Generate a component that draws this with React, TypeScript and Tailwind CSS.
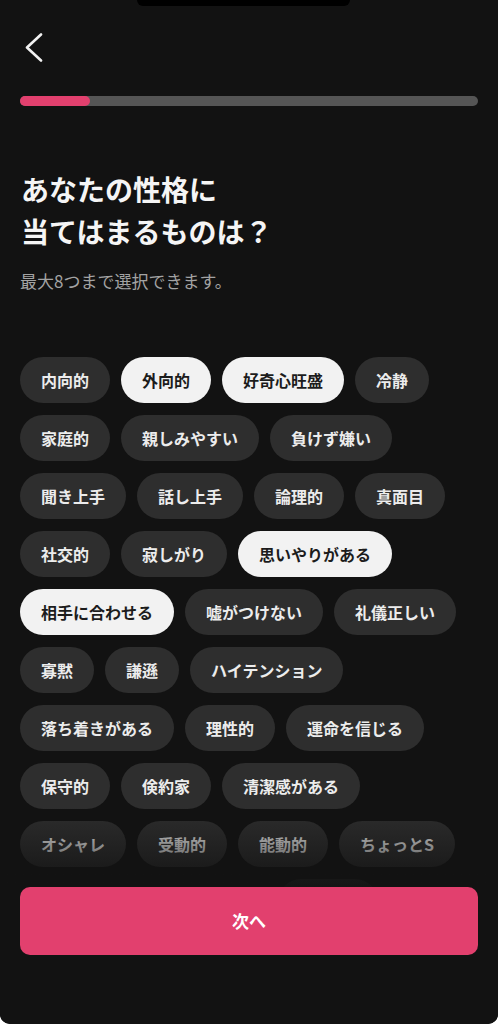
import React from "react";

// ── trait rows, as laid out in the picker ─────────────────────────────────
const rows: string[][] = [
  ["内向的", "外向的", "好奇心旺盛", "冷静"],
  ["家庭的", "親しみやすい", "負けず嫌い"],
  ["聞き上手", "話し上手", "論理的", "真面目"],
  ["社交的", "寂しがり", "思いやりがある"],
  ["相手に合わせる", "嘘がつけない", "礼儀正しい"],
  ["寡黙", "謙遜", "ハイテンション"],
  ["落ち着きがある", "理性的", "運命を信じる"],
  ["保守的", "倹約家", "清潔感がある"],
  ["オシャレ", "受動的", "能動的", "ちょっとS"],
];

const selected = new Set(["外向的", "好奇心旺盛", "思いやりがある", "相手に合わせる"]);

function Chip({ label }: { label: string }) {
  const on = selected.has(label);
  return (
    <div
      className={
        "h-[46px] px-[21px] rounded-full flex items-center text-[16px] font-semibold whitespace-nowrap " +
        (on ? "bg-[#f2f2f2] text-[#1c1c1c]" : "bg-[#2e2e2e] text-[#ececec]")
      }
    >
      {label}
    </div>
  );
}

export default function App() {
  return (
    <div className="bg-white w-[498px] h-[1024px]">
      <div
        className="relative w-[498px] h-[1024px] overflow-hidden bg-[#121212] rounded-b-[10px] text-white"
        style={{ fontFamily: '"Noto Sans CJK JP", "Noto Sans", sans-serif' }}
      >
        {/* notch */}
        <div className="absolute left-[137px] top-0 w-[213px] h-[6px] bg-black rounded-b-[10px]" />

        {/* back */}
        <div className="pt-[33px] pl-[24px] h-[96px]">
          <svg width="20" height="30" viewBox="0 0 20 30" fill="none">
            <polyline
              points="17,1.5 3,14.5 17,27.5"
              stroke="#f2f2f2"
              strokeWidth="2.6"
              strokeLinecap="round"
              strokeLinejoin="round"
            />
          </svg>
        </div>

        {/* progress */}
        <div className="mx-[20px] h-[10px] rounded-full bg-[#555555]">
          <div className="h-[10px] w-[70px] rounded-full bg-[#e2406e]" />
        </div>

        {/* heading */}
        <h1 className="mt-[62px] px-[21px] text-[28px] leading-[42px] font-bold text-[#f5f5f5]">
          あなたの性格に
          <br />
          当てはまるものは？
        </h1>
        <p className="mt-[17px] px-[20px] text-[17px] leading-[24px] text-[#a3a3a3]">
          最大8つまで選択できます。
        </p>

        {/* traits */}
        <div className="mt-[64px] px-[20px] flex flex-col gap-y-[12px]">
          {rows.map((row, i) => (
            <div key={i} className="flex gap-x-[11px]">
              {row.map((t) => (
                <Chip key={t} label={t} />
              ))}
            </div>
          ))}
          {/* next row, scrolled under the footer */}
          <div className="flex">
            <div className="ml-[258px] h-[46px] w-[100px] rounded-full bg-[#2e2e2e]" />
          </div>
        </div>

        {/* footer */}
        <div className="absolute inset-x-0 bottom-0">
          <div className="h-[80px] bg-gradient-to-b from-[#121212]/0 to-[#121212]/90" />
          <div className="bg-[#121212] px-[20px] pb-[69px]">
            <button className="w-full h-[68px] rounded-[10px] bg-[#e2406e] text-white text-[17px] font-bold">
              次へ
            </button>
          </div>
        </div>
      </div>
    </div>
  );
}
